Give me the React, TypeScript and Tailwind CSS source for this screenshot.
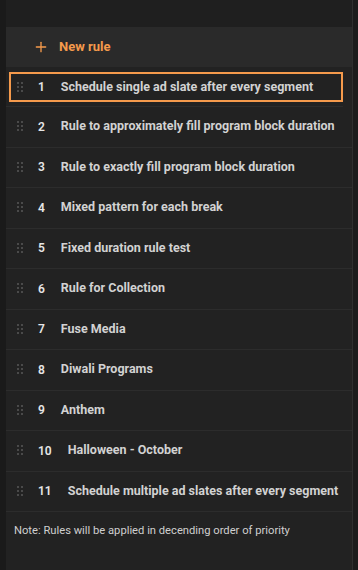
import { Plus } from "lucide-react";

const rules = [
  "Schedule single ad slate after every segment",
  "Rule to approximately fill program block duration",
  "Rule to exactly fill program block duration",
  "Mixed pattern for each break",
  "Fixed duration rule test",
  "Rule for Collection",
  "Fuse Media",
  "Diwali Programs",
  "Anthem",
  "Halloween - October",
  "Schedule multiple ad slates after every segment",
];

function Grip() {
  return (
    <svg width="6" height="11" viewBox="0 0 6 11" className="shrink-0">
      {[0, 4, 8].map((y) =>
        [0, 4].map((x) => (
          <rect key={`${x}-${y}`} x={x} y={y} width="2" height="2" fill="#4a4a4a" />
        ))
      )}
    </svg>
  );
}

export default function App() {
  return (
    <div
      className="w-[358px] h-[570px] bg-[#1c1c1c] flex"
      style={{ fontFamily: "Roboto, 'Liberation Sans', sans-serif" }}
    >
      <div className="w-[6px] bg-[#1a1a1a]" />
      <div className="w-[347px] bg-[#222222] border-r border-[#2f2f2f] flex flex-col">
        <div className="h-[27px] bg-[#1f1f1f]" />
        <div className="h-[40px] bg-[#2a2a2a] flex items-center pl-[27px] text-[#f59a4c]">
          <Plus size={16} strokeWidth={2} />
          <span className="ml-[10px] text-[13px] font-bold">New rule</span>
        </div>

        <div className="pr-[9px]">
          {rules.map((name, i) => (
            <div
              key={i}
              className={
                i === 0
                  ? "h-[40px] pt-[5px] pb-[4px] pl-[3px] border-b border-[#2c2c2c]"
                  : "h-[40.5px] flex items-center pl-[11px] border-b border-[#2c2c2c] -mr-[9px]"
              }
            >
              {i === 0 ? (
                <div className="h-full border-2 border-[#f59a4c] flex items-center pl-[6px]">
                  <Grip />
                  <span className="ml-[15px] mr-[16px] text-[12px] font-semibold text-[#e6e6e6]">1</span>
                  <span className="text-[12.5px] font-bold text-[#d2d2d2]">{name}</span>
                </div>
              ) : (
                <>
                  <Grip />
                  <span className="ml-[15px] mr-[16px] text-[12px] font-semibold text-[#e6e6e6]">{i + 1}</span>
                  <span className="text-[12.5px] font-bold text-[#d2d2d2]">{name}</span>
                </>
              )}
            </div>
          ))}
        </div>

        <div className="pl-[8px] pt-[11px] text-[11.2px] text-[#cfcfcf]">
          Note: Rules will be applied in decending order of priority
        </div>
      </div>
    </div>
  );
}
